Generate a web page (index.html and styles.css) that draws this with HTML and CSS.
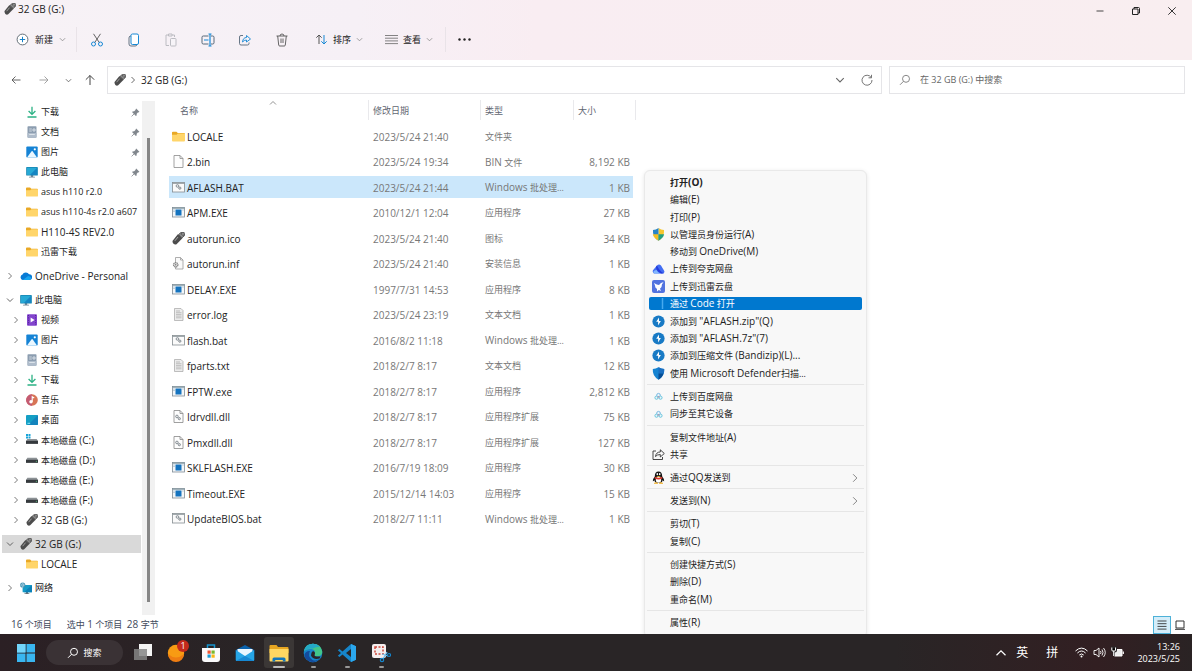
FILE: index.html
```html
<!DOCTYPE html>
<html lang="zh-CN">
<head>
<meta charset="utf-8">
<title>32 GB (G:)</title>
<link rel="stylesheet" href="styles.css">
</head>
<body>
<svg class="sprite" aria-hidden="true">
  <symbol id="usb" viewBox="0 0 12 12"><path d="M.6 8 5.400 2 9.600 5.800 4.200 11.200Q2.800 12.200 1.400 10.900.2 9.500.6 8Z" fill="#4c4c4c"/><path d="M6 2.400 8.200.5 11.200.4 11.700 3.200 9.300 5.400Z" fill="#8c8c8c" stroke="#4c4c4c" stroke-width=".8"/><path d="M8.200 1.800h.9M9.800 3h.9" stroke="#222" stroke-width=".8"/><path d="M2.600 8.200 5.600 4.600" stroke="#a8a8a8" stroke-width=".9"/></symbol>
  <symbol id="folder" viewBox="0 0 12 12"><path d="M0 2.400Q0 1.500.9 1.500h3.200l1.200 1.300h5.800q.9 0 .9.900V6H0Z" fill="#e9a825"/><path d="M0 4.300h4.200l1.200-1.100H12v6.500q0 .9-.9.900H.9Q0 10.600 0 9.700Z" fill="#ffd56a"/></symbol>
  <symbol id="download" viewBox="0 0 12 12"><path d="M6 .8v7.400M2.600 5 6 8.400 9.400 5M1.500 11h9" fill="none" stroke="#2bb184" stroke-width="1.300"/></symbol>
  <symbol id="doc" viewBox="0 0 12 12"><rect x="1.500" y=".3" width="9" height="11.400" rx=".8" fill="#8c9db0"/><path d="M1.500 7h9v4q0 .7-.8.7H2.300q-.8 0-.8-.7Z" fill="#afbccb"/><path d="M3.200 3h2.600M3.200 5h2.600M7 3h2v2H7ZM3.200 8.500h5.600" stroke="#eef3f8" stroke-width=".7" fill="none"/></symbol>
  <symbol id="picture" viewBox="0 0 12 12"><rect x=".3" y=".5" width="11.400" height="11" rx="1" fill="#1583d5"/><path d="M1 11.500 5.600 5.200q.5-.5 1 0L11 11.500Z" fill="#eaf7ff"/><circle cx="8.800" cy="3.300" r="1.100" fill="#fff"/></symbol>
  <symbol id="pc" viewBox="0 0 12 12"><path d="M4.800 9h2.400v1.800H9v.7H3v-.7h1.800Z" fill="#718696"/><rect x=".2" y="1" width="11.600" height="8.600" rx=".7" fill="#1684ae"/><path d="M.9 1.700h10.200v7.200H.9Z" fill="#27a9d5"/><path d="M11.100 1.700v7.200H3.900Z" fill="#1685c2"/></symbol>
  <symbol id="cloud" viewBox="0 0 13 12"><path d="M3 10.300a3 3 0 0 1-.3-5.800 4 4 0 0 1 7.100-.4 3.100 3.100 0 0 1 .5 6.200Z" fill="#087bd5"/><path d="M3 10.300 8 6.500q1-1 2.500 0l1.800 1.300q-.3 2.200-2 2.500Z" fill="#18a5ef"/></symbol>
  <symbol id="video" viewBox="0 0 12 12"><rect x="1" y=".3" width="10" height="11.400" rx="1" fill="#8244cd"/><path d="M2.500 1v10M9.500 1v10" stroke="#532398" stroke-width="1" stroke-dasharray="1 1.400"/><path d="m4.600 3.600 4 2.400-4 2.400Z" fill="#fff"/></symbol>
  <symbol id="music" viewBox="0 0 12 12"><circle cx="6" cy="6" r="5.800" fill="#d77556"/><path d="M.5 8A5.800 5.800 0 0 1 6 .2v11.600A5.800 5.800 0 0 1 .5 8Z" fill="#c45b72"/><circle cx="5" cy="7.700" r="1.700" fill="#fff"/><path d="M6.200 7.700V2.800l2 1.200" stroke="#fff" stroke-width="1.100" fill="none"/></symbol>
  <symbol id="desktop" viewBox="0 0 12 12"><rect x="0" y="1" width="12" height="10" rx="1" fill="#159fc4"/><path d="M12 1v9q0 1-1 1H2Z" fill="#1384bd"/><path d="M1.500 9.300h2.700" stroke="#8beaff" stroke-width="1"/></symbol>
  <symbol id="drive" viewBox="0 0 12 12"><path d="M1.400 3.800h9.200L12 6v2.800H0V6Z" fill="#8d9296"/><path d="M0 5.800h12v3H0Z" fill="#35393d"/><circle cx="10.300" cy="7.300" r=".5" fill="#5de08a"/></symbol>
  <symbol id="sysdrive" viewBox="0 0 12 12"><path d="M1.400 5h9.200L12 7v2.800H0V7Z" fill="#8d9296"/><path d="M0 6.800h12v3H0Z" fill="#35393d"/><path d="M0 0h2v2H0ZM2.500 0h2v2h-2ZM0 2.500h2v2H0ZM2.500 2.500h2v2h-2Z" fill="#18a4d8"/></symbol>
  <symbol id="network" viewBox="0 0 12 12"><path d="M6 10h2v1.300h1.300v.6H4.500v-.6H6Z" fill="#66717b"/><rect x="2.600" y="3" width="9.400" height="7.300" rx=".6" fill="#159bc6"/><path d="M12 3v7.300H4Z" fill="#0b81b8"/><circle cx="2.700" cy="3" r="2.600" fill="#458fae"/><path d="M.3 3h4.800M2.700.5q-2 2.500 0 5M2.700.5q2 2.500 0 5" stroke="#c4e7f3" stroke-width=".5" fill="none"/></symbol>
  <symbol id="pin" viewBox="0 0 9 9"><path d="m5.200.6 3.200 3.200-.7.600-.6-.1-1.400 1.500-.1 1.600-.7.600L1 4.100l.7-.7 1.500-.1L4.700 1.800l-.1-.6Z" fill="#81878d"/><path d="M3 6 .6 8.400" stroke="#81878d" stroke-width=".8"/></symbol>
  <symbol id="right" viewBox="0 0 8 8"><path d="m2.500 1 3 3-3 3" fill="none" stroke="currentColor" stroke-width=".8"/></symbol>
  <symbol id="down" viewBox="0 0 8 8"><path d="m1 2.500 3 3 3-3" fill="none" stroke="currentColor" stroke-width=".9"/></symbol>
  <symbol id="up" viewBox="0 0 8 8"><path d="m1 5.500 3-3 3 3" fill="none" stroke="currentColor" stroke-width=".8"/></symbol>
  <symbol id="file" viewBox="0 0 12 13"><path d="M1.500.5h6l3 3v9h-9ZM7.500.5v3h3" fill="#fdfdfd" stroke="#8b8b8b" stroke-width=".8"/></symbol>
  <symbol id="text" viewBox="0 0 12 13"><path d="M2 .5h6.500l2 2v10H2Z" fill="#ececec" stroke="#a5a5a5" stroke-width=".7"/><path d="M3.500 3h4M3.500 4.700h5.500M3.500 6.400h5.500M3.500 8.100h5.500M3.500 9.800h5.500" stroke="#aaa" stroke-width=".7"/></symbol>
  <symbol id="gears" viewBox="0 0 8 8"><circle cx="2.800" cy="2.800" r="1.500" fill="#eee" stroke="#7c858b" stroke-width="1"/><circle cx="5.500" cy="5.300" r="1.300" fill="#ddd" stroke="#7c858b" stroke-width="1"/></symbol>
  <symbol id="bat" viewBox="0 0 13 12"><rect x=".5" y="1" width="12" height="9.500" fill="#fafafa" stroke="#858d91" stroke-width=".8"/><path d="M.5 1.800h12" stroke="#8c969c"/><use href="#gears" x="3" y="2" width="7" height="7"/></symbol>
  <symbol id="dll" viewBox="0 0 12 13"><path d="M1.500.5h6l3 3v9h-9ZM7.500.5v3h3" fill="#fdfdfd" stroke="#888" stroke-width=".8"/><use href="#gears" x="2" y="4" width="7" height="7"/></symbol>
  <symbol id="inf" viewBox="0 0 12 13"><path d="M3 .5h5l2.500 2.500v9H3ZM8 .5V3h2.500" fill="#fafafa" stroke="#999" stroke-width=".8"/><circle cx="3.200" cy="7.800" r="2.200" fill="#ddd" stroke="#858585" stroke-width="1.200" stroke-dasharray="1.300 .4"/><circle cx="3.200" cy="7.800" r=".7" fill="#777"/></symbol>
  <symbol id="exe" viewBox="0 0 13 12"><rect x=".5" y="1" width="12" height="9.500" fill="#f3f6f8" stroke="#7f8d96" stroke-width=".8"/><path d="M.5 1.700h12" stroke="#7f949f"/><path d="M3.500 3h6v6h-6Z" fill="#1473bf"/><path d="M1.300 3.500h1.400M1.300 5h1.400M10.300 3.500h1.400" stroke="#98b4c5" stroke-width=".8"/></symbol>
  <symbol id="shield" viewBox="0 0 13 13"><path d="M6.500 0Q9 1.900 12 1.900 12.700 9 6.500 12.700Z" fill="#f6c62d"/><path d="M6.500 0Q4 1.900 1 1.900.3 9 6.500 12.700Z" fill="#2584c6"/><path d="M.9 6.300H6.500v6.400Q1.700 10.300.9 6.300Z" fill="#f3bf23"/><path d="M6.500 6.300h5.600Q11.300 10.300 6.500 12.700Z" fill="#249f80"/></symbol>
  <symbol id="quark" viewBox="0 0 13 13"><path d="M2 10.500Q-.7 8.300 2 6l3-3.500q2-2 4 0l3 5q1.500 3-2 3Z" fill="#426df2"/><path d="M5 2.500q2 5 7 8H9Q4 8 4 3.700Z" fill="#253bdc"/><path d="M2 10.500Q0 7.500 4.500 7q1 2.500 4 3.500Z" fill="#83b8ff"/></symbol>
  <symbol id="thunder" viewBox="0 0 13 13"><rect width="13" height="13" rx="2" fill="#5273df"/><path d="M2 3q3 2 5 2 2-3 4.500-2.800L10 4.200q0 3-2 4.500L9 11l-2.200-1L5 11.500V9Q2.800 7.500 3 5.500Z" fill="#fff"/></symbol>
  <symbol id="bandizip" viewBox="0 0 13 13"><circle cx="6.500" cy="6.500" r="6.100" fill="#187ac5"/><path d="M7 2.500 4.200 6.800H6.200L6 10.500l2.900-4.400H7Z" fill="#fff"/></symbol>
  <symbol id="defender" viewBox="0 0 13 13"><path d="M6.500.3Q9.300 2 12.200 2 12.800 9 6.500 12.700.2 9 .8 2 3.700 2 6.500.3Z" fill="#1583d1"/><path d="M6.500.3Q9.300 2 12.200 2q.2 2.500-.5 4.500H6.500Z" fill="#1b6fc1"/><path d="M6.500 6.500h5.200q-1.200 4-5.200 6.200Z" fill="#074d94"/></symbol>
  <symbol id="baidu" viewBox="0 0 13 13"><circle cx="6.500" cy="5.200" r="1.800" fill="#e8f5fc" stroke="#7ab8e2"/><circle cx="4.500" cy="7.700" r="1.600" fill="#e2f6fb" stroke="#6cc5dd"/><circle cx="8.500" cy="7.700" r="1.600" fill="#e2f6fb" stroke="#6cc5dd"/><path d="m5.500 7.500 1-1 1 1" stroke="#dc6580" stroke-width=".8" fill="none"/></symbol>
  <symbol id="shareout" viewBox="0 0 13 13"><path d="M4 3H1v8.500h9.500V9M3.500 8.500Q4 4 8.300 4V1.800l4 3.700-4 3.500V6.500Q5 6.500 3.500 8.500Z" fill="none" stroke="#333" stroke-width=".9"/></symbol>
  <symbol id="qq" viewBox="0 0 13 13"><path d="M2.800 5.500Q2.800.4 6.500.4t3.700 5.100q2.500 3 2 4.800-.7.200-1.500-1.200Q10.500 12 6.500 12T2.300 9.100Q1.500 10.500.8 10.300.3 8.500 2.800 5.500Z" fill="#151515"/><ellipse cx="6.500" cy="8.800" rx="2.700" ry="3" fill="#fff"/><path d="M2.700 5.700q3.800 2 7.600 0v1.800q-3.800 1.800-7.600 0Z" fill="#dd392d"/><path d="M4 4.900h5L6.500 6Z" fill="#f6b927"/><ellipse cx="5.300" cy="3.200" rx=".8" ry="1.100" fill="#fff"/><ellipse cx="7.700" cy="3.200" rx=".8" ry="1.100" fill="#fff"/><path d="M2 12q2-1.500 4 0v.8H2ZM7 12q2-1.500 4 0v.8H7Z" fill="#efad22"/></symbol>
  <symbol id="search" viewBox="0 0 12 12"><circle cx="7" cy="4.800" r="3.500" fill="none" stroke="currentColor" stroke-width="1"/><path d="M4.500 7.300 1 10.800" stroke="currentColor" stroke-width="1"/></symbol>
</svg>

<div class="window">
  <header class="chrome">
    <div class="titlebar">
      <h1 class="title en"><svg class="i12"><use href="#usb"/></svg>32 GB (G:)</h1>
      <div class="window-controls">
        <button aria-label="最小化"><svg class="i10" viewBox="0 0 10 10"><path d="M1.500 5h7" stroke="#333" stroke-width=".9"/></svg></button>
        <button aria-label="还原"><svg class="i10" viewBox="0 0 10 10"><path d="M1.500 3h5.500v5.500H1.500ZM3 3V1.500h4.500q1 0 1 1V7H7" fill="none" stroke="#222" stroke-width="1"/></svg></button>
        <button aria-label="关闭"><svg class="i10" viewBox="0 0 10 10"><path d="m1.300 1.300 7.400 7.400M8.700 1.300 1.300 8.700" stroke="#222" stroke-width=".9"/></svg></button>
      </div>
    </div>
    <div class="toolbar">
      <button class="command new"><svg class="i13" viewBox="0 0 13 13"><circle cx="6.500" cy="6.500" r="5.400" fill="#fff" stroke="#55606a" stroke-width=".9"/><path d="M6.500 3.800v5.400M3.800 6.500h5.400" stroke="#1680ca"/></svg>新建<svg class="i7"><use href="#down"/></svg></button>
      <span class="divider"></span>
      <div class="icon-commands">
        <button aria-label="剪切"><svg class="i14" viewBox="0 0 14 14"><path d="m3.500.8 5.800 8.800M10.500.8 4.700 9.600" stroke="#555" stroke-width=".9"/><circle cx="3.500" cy="11" r="2" fill="none" stroke="#1688d5"/><circle cx="10.500" cy="11" r="2" fill="none" stroke="#1688d5"/></svg></button>
        <button aria-label="复制"><svg class="i14" viewBox="0 0 14 14"><path d="M4 3H3q-1 1-1 2v6q0 2 2 2h4q1.500 0 2-1" fill="none" stroke="#567" stroke-width=".9"/><rect x="4" y="1" width="7.500" height="10.500" rx="1.500" fill="#fff" stroke="#1688d5"/></svg></button>
        <button aria-label="粘贴" disabled><svg class="i14" viewBox="0 0 14 14"><path d="M5 12.500H2V2h2.500M8 2h2.500v2M4.500 1h3.500v2H4.500Z" fill="none" stroke="#bcbcc2"/><rect x="6.500" y="5.500" width="5.500" height="7.500" rx=".8" fill="#f7f4f8" stroke="#bcbcc2"/></svg></button>
        <button aria-label="重命名"><svg class="i14" viewBox="0 0 14 14"><path d="M7.500 3H2.300Q1 3 1 4.300v5.400Q1 11 2.300 11h5.200M10 3h1.700Q13 3 13 4.300v5.400q0 1.300-1.300 1.300H10" fill="none" stroke="#566879"/><path d="M3 7h4.500M9 1v12M7.500 1h3M7.500 13h3" stroke="#1688d5" stroke-width="1.200"/></svg></button>
        <button aria-label="共享"><svg class="i14" viewBox="0 0 14 14"><path d="M5 2.500H3Q1.500 2.500 1.500 4v6.500Q1.500 12 3 12h6.500q1.500 0 1.500-1.500V9.500" fill="none" stroke="#566879" stroke-width=".9"/><path d="M4.500 9Q5 4.500 8.500 4.500v-2L12.500 6 8.500 9V7Q6 7 4.500 9Z" fill="none" stroke="#1688d5" stroke-width=".9"/></svg></button>
        <button aria-label="删除"><svg class="i14" viewBox="0 0 14 14"><path d="M1.500 3h11M5 3q0-2 2-2t2 2M2.700 3l1 9q.1 1 1 1h4.600q.9 0 1-1l1-9M6 5.500v4.500M8 5.500v4.500" fill="none" stroke="#555" stroke-width=".9"/></svg></button>
      </div>
      <button class="command sort"><svg class="i13" viewBox="0 0 13 13"><path d="M4 11V2M1.300 4.700 4 2l2.700 2.700" fill="none" stroke="#555"/><path d="M9 2v9M6.300 8.300 9 11l2.700-2.700" fill="none" stroke="#1688d5"/></svg>排序<svg class="i7"><use href="#down"/></svg></button>
      <button class="command view"><svg class="i13" viewBox="0 0 13 13"><path d="M0 2.500h13M0 5.200h13M0 7.900h13M0 10.600h13" stroke="#666" stroke-width=".8"/></svg>查看<svg class="i7"><use href="#down"/></svg></button>
      <span class="divider"></span>
      <button class="more" aria-label="更多"><svg class="i13" viewBox="0 0 13 13"><g fill="#222"><circle cx="1.500" cy="6.500" r="1.200"/><circle cx="6.500" cy="6.500" r="1.200"/><circle cx="11.500" cy="6.500" r="1.200"/></g></svg></button>
    </div>
  </header>

  <div class="address-row">
    <nav class="history" aria-label="历史">
      <button class="back" aria-label="后退"><svg class="i10" viewBox="0 0 10 10"><path d="M9.500 5H1M4.500 1.500 1 5l3.500 3.500" fill="none" stroke="#555" stroke-width=".9"/></svg></button>
      <button class="forward" aria-label="前进"><svg class="i10" viewBox="0 0 10 10"><path d="M.5 5H9M5.500 1.500 9 5 5.500 8.500" fill="none" stroke="#999" stroke-width=".9"/></svg></button>
      <button class="recent" aria-label="最近位置"><svg class="i7"><use href="#down"/></svg></button>
      <button class="parent" aria-label="向上"><svg class="i12" viewBox="0 0 12 12"><path d="M6 11V1.500M1.800 5.700 6 1.500l4.200 4.200" fill="none" stroke="#444" stroke-width="1"/></svg></button>
    </nav>
    <div class="path">
      <svg class="i12"><use href="#usb"/></svg>
      <svg class="i8"><use href="#right"/></svg>
      <a href="#" class="en">32 GB (G:)</a>
      <button class="path-drop" aria-label="展开"><svg class="i10"><use href="#down"/></svg></button>
      <button aria-label="刷新"><svg class="i12" viewBox="0 0 12 12"><path d="M10.200 3.500A5 5 0 1 0 11 6M10.500.8v3h-3" fill="none" stroke="#666" stroke-width=".9"/></svg></button>
    </div>
    <label class="searchbox"><svg class="i12"><use href="#search"/></svg><input type="search" placeholder="在 32 GB (G:) 中搜索" aria-label="搜索"></label>
  </div>

  <main class="content">
    <nav class="sidebar" aria-label="导航窗格">
      <div class="tree">
        <div class="group">
          <a href="#" class="node leaf"><svg class="i12"><use href="#download"/></svg><span>下载</span><svg class="pin"><use href="#pin"/></svg></a>
          <a href="#" class="node leaf"><svg class="i12"><use href="#doc"/></svg><span>文档</span><svg class="pin"><use href="#pin"/></svg></a>
          <a href="#" class="node leaf"><svg class="i12"><use href="#picture"/></svg><span>图片</span><svg class="pin"><use href="#pin"/></svg></a>
          <a href="#" class="node leaf"><svg class="i12"><use href="#pc"/></svg><span>此电脑</span><svg class="pin"><use href="#pin"/></svg></a>
          <a href="#" class="node leaf"><svg class="i12"><use href="#folder"/></svg><span>asus h110 r2.0</span></a>
          <a href="#" class="node leaf"><svg class="i12"><use href="#folder"/></svg><span>asus h110-4s r2.0 a607</span></a>
          <a href="#" class="node leaf en"><svg class="i12"><use href="#folder"/></svg><span>H110-4S REV2.0</span></a>
          <a href="#" class="node leaf"><svg class="i12"><use href="#folder"/></svg><span>迅雷下载</span></a>
        </div>
        <div class="group">
          <a href="#" class="node en"><svg class="i8"><use href="#right"/></svg><svg class="i12"><use href="#cloud"/></svg><span>OneDrive - Personal</span></a>
        </div>
        <div class="group">
          <a href="#" class="node"><svg class="i8"><use href="#down"/></svg><svg class="i12"><use href="#pc"/></svg><span>此电脑</span></a>
          <a href="#" class="node child"><svg class="i8"><use href="#right"/></svg><svg class="i12"><use href="#video"/></svg><span>视频</span></a>
          <a href="#" class="node child"><svg class="i8"><use href="#right"/></svg><svg class="i12"><use href="#picture"/></svg><span>图片</span></a>
          <a href="#" class="node child"><svg class="i8"><use href="#right"/></svg><svg class="i12"><use href="#doc"/></svg><span>文档</span></a>
          <a href="#" class="node child"><svg class="i8"><use href="#right"/></svg><svg class="i12"><use href="#download"/></svg><span>下载</span></a>
          <a href="#" class="node child"><svg class="i8"><use href="#right"/></svg><svg class="i12"><use href="#music"/></svg><span>音乐</span></a>
          <a href="#" class="node child"><svg class="i8"><use href="#right"/></svg><svg class="i12"><use href="#desktop"/></svg><span>桌面</span></a>
          <a href="#" class="node child"><svg class="i8"><use href="#right"/></svg><svg class="i12"><use href="#sysdrive"/></svg><span>本地磁盘 <b class="en">(C:)</b></span></a>
          <a href="#" class="node child"><svg class="i8"><use href="#right"/></svg><svg class="i12"><use href="#drive"/></svg><span>本地磁盘 <b class="en">(D:)</b></span></a>
          <a href="#" class="node child"><svg class="i8"><use href="#right"/></svg><svg class="i12"><use href="#drive"/></svg><span>本地磁盘 <b class="en">(E:)</b></span></a>
          <a href="#" class="node child"><svg class="i8"><use href="#right"/></svg><svg class="i12"><use href="#drive"/></svg><span>本地磁盘 <b class="en">(F:)</b></span></a>
          <a href="#" class="node child en"><svg class="i8"><use href="#right"/></svg><svg class="i12"><use href="#usb"/></svg><span>32 GB (G:)</span></a>
        </div>
        <div class="group">
          <a href="#" class="node current en"><svg class="i8"><use href="#down"/></svg><svg class="i12"><use href="#usb"/></svg><span>32 GB (G:)</span></a>
          <a href="#" class="node leaf en"><svg class="i12"><use href="#folder"/></svg><span>LOCALE</span></a>
        </div>
        <div class="group">
          <a href="#" class="node"><svg class="i8"><use href="#right"/></svg><svg class="i12"><use href="#network"/></svg><span>网络</span></a>
        </div>
      </div>
      <div class="scrollbar"><div class="thumb"></div></div>
    </nav>

    <section class="files">
      <table>
        <colgroup><col class="c-name"><col class="c-date"><col class="c-type"><col class="c-size"><col class="c-end"></colgroup>
        <thead><tr><th class="name-head"><span>名称</span><svg class="i8"><use href="#up"/></svg></th><th>修改日期</th><th>类型</th><th>大小</th><th class="end-head"></th></tr></thead>
        <tbody>
          <tr><td><svg><use href="#folder"/></svg>LOCALE</td><td>2023/5/24 21:40</td><td>文件夹</td><td></td></tr>
          <tr><td><svg><use href="#file"/></svg>2.bin</td><td>2023/5/24 19:34</td><td><b class="en">BIN</b> 文件</td><td>8,192 KB</td></tr>
          <tr class="selected"><td><svg><use href="#bat"/></svg>AFLASH.BAT</td><td>2023/5/24 21:44</td><td><b class="en">Windows</b> 批处理...</td><td>1 KB</td></tr>
          <tr><td><svg><use href="#exe"/></svg>APM.EXE</td><td>2010/12/1 12:04</td><td>应用程序</td><td>27 KB</td></tr>
          <tr><td><svg><use href="#usb"/></svg>autorun.ico</td><td>2023/5/24 21:40</td><td>图标</td><td>34 KB</td></tr>
          <tr><td><svg><use href="#inf"/></svg>autorun.inf</td><td>2023/5/24 21:40</td><td>安装信息</td><td>1 KB</td></tr>
          <tr><td><svg><use href="#exe"/></svg>DELAY.EXE</td><td>1997/7/31 14:53</td><td>应用程序</td><td>8 KB</td></tr>
          <tr><td><svg><use href="#text"/></svg>error.log</td><td>2023/5/24 23:19</td><td>文本文档</td><td>1 KB</td></tr>
          <tr><td><svg><use href="#bat"/></svg>flash.bat</td><td>2016/8/2 11:18</td><td><b class="en">Windows</b> 批处理...</td><td>1 KB</td></tr>
          <tr><td><svg><use href="#text"/></svg>fparts.txt</td><td>2018/2/7 8:17</td><td>文本文档</td><td>12 KB</td></tr>
          <tr><td><svg><use href="#exe"/></svg>FPTW.exe</td><td>2018/2/7 8:17</td><td>应用程序</td><td>2,812 KB</td></tr>
          <tr><td><svg><use href="#dll"/></svg>Idrvdll.dll</td><td>2018/2/7 8:17</td><td>应用程序扩展</td><td>75 KB</td></tr>
          <tr><td><svg><use href="#dll"/></svg>Pmxdll.dll</td><td>2018/2/7 8:17</td><td>应用程序扩展</td><td>127 KB</td></tr>
          <tr><td><svg><use href="#exe"/></svg>SKLFLASH.EXE</td><td>2016/7/19 18:09</td><td>应用程序</td><td>30 KB</td></tr>
          <tr><td><svg><use href="#exe"/></svg>Timeout.EXE</td><td>2015/12/14 14:03</td><td>应用程序</td><td>15 KB</td></tr>
          <tr><td><svg><use href="#bat"/></svg>UpdateBIOS.bat</td><td>2018/2/7 11:11</td><td><b class="en">Windows</b> 批处理...</td><td>1 KB</td></tr>
        </tbody>
      </table>
    </section>
  </main>

  <footer class="status">
    <span><b class="en">16</b> 个项目</span>
    <span>选中 <b class="en">1</b> 个项目&nbsp; <b class="en">28</b> 字节</span>
    <div class="view-modes">
      <button class="on" aria-label="详细信息"><svg class="i10" viewBox="0 0 10 10"><path d="M.5 1h9M.5 3.700h9M.5 6.400h9M.5 9.100h9" stroke="#333" stroke-width=".9"/></svg></button>
      <button aria-label="大图标"><svg class="i10" viewBox="0 0 10 10"><path d="M1 1h8v7H1ZM0 9.300h10" fill="none" stroke="#333"/></svg></button>
    </div>
  </footer>
</div>

<div class="context-menu" role="menu">
  <div class="menu-group">
    <button role="menuitem"><i></i><strong>打开<b class="en">(O)</b></strong></button>
    <button role="menuitem"><i></i><span>编辑<b class="en">(E)</b></span></button>
    <button role="menuitem"><i></i><span>打印<b class="en">(P)</b></span></button>
    <button role="menuitem"><svg><use href="#shield"/></svg><span>以管理员身份运行<b class="en">(A)</b></span></button>
    <button role="menuitem"><i></i><span>移动到 <b class="en">OneDrive(M)</b></span></button>
    <button role="menuitem"><svg><use href="#quark"/></svg><span>上传到夸克网盘</span></button>
    <button role="menuitem"><svg><use href="#thunder"/></svg><span>上传到迅雷云盘</span></button>
    <button role="menuitem" class="hot"><svg viewBox="0 0 13 13"><path d="M10.500 1v11" stroke="#45a9ef" stroke-width="1.500"/></svg><span>通过 <b class="en">Code</b> 打开</span></button>
    <button role="menuitem"><svg><use href="#bandizip"/></svg><span>添加到 <b class="en">"AFLASH.zip"(Q)</b></span></button>
    <button role="menuitem"><svg><use href="#bandizip"/></svg><span>添加到 <b class="en">"AFLASH.7z"(7)</b></span></button>
    <button role="menuitem"><svg><use href="#bandizip"/></svg><span>添加到压缩文件 <b class="en">(Bandizip)(L)...</b></span></button>
    <button role="menuitem"><svg><use href="#defender"/></svg><span>使用 <b class="en">Microsoft Defender</b>扫描...</span></button>
  </div>
  <div class="menu-group">
    <button role="menuitem"><svg><use href="#baidu"/></svg><span>上传到百度网盘</span></button>
    <button role="menuitem"><svg><use href="#baidu"/></svg><span>同步至其它设备</span></button>
  </div>
  <div class="menu-group">
    <button role="menuitem"><i></i><span>复制文件地址<b class="en">(A)</b></span></button>
    <button role="menuitem"><svg><use href="#shareout"/></svg><span>共享</span></button>
  </div>
  <div class="menu-group">
    <button role="menuitem"><svg><use href="#qq"/></svg><span>通过<b class="en">QQ</b>发送到</span><svg class="sub"><use href="#right"/></svg></button>
  </div>
  <div class="menu-group">
    <button role="menuitem"><i></i><span>发送到<b class="en">(N)</b></span><svg class="sub"><use href="#right"/></svg></button>
  </div>
  <div class="menu-group">
    <button role="menuitem"><i></i><span>剪切<b class="en">(T)</b></span></button>
    <button role="menuitem"><i></i><span>复制<b class="en">(C)</b></span></button>
  </div>
  <div class="menu-group">
    <button role="menuitem"><i></i><span>创建快捷方式<b class="en">(S)</b></span></button>
    <button role="menuitem"><i></i><span>删除<b class="en">(D)</b></span></button>
    <button role="menuitem"><i></i><span>重命名<b class="en">(M)</b></span></button>
  </div>
  <div class="menu-group">
    <button role="menuitem"><i></i><span>属性<b class="en">(R)</b></span></button>
  </div>
</div>

<div class="taskbar">
  <button class="start" aria-label="开始"><svg class="i20" viewBox="0 0 20 20"><path d="M1 1h8.500v8.500H1ZM10.500 1H19v8.500h-8.500ZM1 10.500h8.500V19H1ZM10.500 10.500H19V19h-8.500Z" fill="#39b6f0"/><path d="M1 1h8.500v8.500H1Z" fill="#72d5fa"/></svg></button>
  <button class="task-search"><svg class="i12"><use href="#search"/></svg>搜索</button>
  <div class="apps">
    <button aria-label="任务视图"><svg class="i20" viewBox="0 0 20 20"><path d="M6 1h13v12H6Z" fill="#f4f4f4"/><path d="M1 6h13v11H1Z" fill="#858585" opacity=".85"/></svg></button>
    <button aria-label="小组件"><svg class="i20" viewBox="0 0 20 20"><circle cx="9" cy="10" r="8.200" fill="#f89b13"/><path d="M1 11a8 8 0 0 0 16 0Q9 18 1 11Z" fill="#ef7d12"/></svg><span class="badge">1</span></button>
    <button aria-label="应用商店"><svg class="i20" viewBox="0 0 20 20"><path d="M6.500 5V2h7v3" fill="none" stroke="#1592cb" stroke-width="1.500"/><path d="M1 5h18v11q0 3-3 3H4q-3 0-3-3Z" fill="#fafafa"/><path d="M6.500 7.500h3.200v3.200H6.500Z" fill="#ef5432"/><path d="M10.500 7.500h3.200v3.200h-3.200Z" fill="#77b82b"/><path d="M6.500 11.500h3.200v3.200H6.500Z" fill="#199dd8"/><path d="M10.500 11.500h3.200v3.200h-3.200Z" fill="#f8b714"/></svg></button>
    <button aria-label="邮件"><svg class="i20" viewBox="0 0 20 20"><path d="m.8 7 9.200-5 9.200 5v10.500H.8Z" fill="#0961ab"/><path d="M2.500 6h15v7h-15Z" fill="#e8f6ff"/><path d="m.8 7 9.200 6 9.200-6v10q0 1-1 1H1.800q-1 0-1-1Z" fill="#26a5e6"/><path d="m.8 18 9.200-5 9.200 5Z" fill="#1688d3"/></svg></button>
    <button class="active running" aria-label="文件资源管理器"><svg class="i20" viewBox="0 0 20 20"><path d="M.5 3q0-1 1-1h6l1.500 2h9.500q1 0 1 1v5H.5Z" fill="#e7a621"/><path d="M.5 6h19v11.500q0 1-1 1h-17q-1 0-1-1Z" fill="#ffd762"/><path d="M3.500 18.500V16q0-1.500 1.500-1.500h10q1.500 0 1.500 1.500v2.500h-2.700V17H6.200v1.500Z" fill="#1477bc"/></svg></button>
    <button class="running" aria-label="浏览器"><svg class="i20" viewBox="0 0 20 20"><circle cx="10" cy="10" r="9.300" fill="#1786cb"/><path d="M1 8Q2.500.7 10 .7q8 0 9.300 8-.2 4.500-5 4.500-3 0-2.800-1.200 2-5-3-6Q4 5.500 1 8Z" fill="#42c78b"/><path d="M1 8Q2.500.7 10 .7q4 0 7 3-5 0-7.500 2Q5 4.500 1 8Z" fill="#24a9c8"/><path d="M7 8q-3 5 2.500 9 4.500 1.500 7-1.500-3 4-7.500 3.700Q1 17 1.500 11.500 3 7.500 7 8Z" fill="#144c9d"/><path d="M11.500 12q0 2 6 1.500l-1 2Q10 17 8 12.500 8 9 10 8q3 1 1.500 4Z" fill="#2b2526"/></svg></button>
    <button class="running" aria-label="代码编辑器"><svg class="i20" viewBox="0 0 20 20"><path d="m14 1 5 2.300v13.400L14 19 5.500 11.500 2.500 14 .8 12.800 4 10 .8 7.200 2.500 6l3 2.500ZM14 6l-5 4 5 4Z" fill="#1685ca" fill-rule="evenodd"/><path d="m14 1 5 2.300v13.400L14 19Z" fill="#2ba7ed"/></svg></button>
    <button class="running" aria-label="截图工具"><svg class="i20" viewBox="0 0 20 20"><rect x="1" y="1" width="14" height="14" rx="2" fill="#f4eeee"/><path d="M4 4h8v7H4Z" fill="none" stroke="#cb4a3d" stroke-width="1.500" stroke-dasharray="2 1.500"/><path d="m12 16 4-7M11 11l6 2" stroke="#73bdeb" stroke-width="1.300"/><circle cx="11" cy="17" r="1.700" fill="none" stroke="#1686cc" stroke-width="1.200"/><circle cx="18" cy="12" r="1.500" fill="none" stroke="#1686cc" stroke-width="1.200"/></svg></button>
  </div>
  <div class="tray">
    <button aria-label="显示隐藏的图标"><svg class="i12"><use href="#up"/></svg></button>
    <button class="ime">英</button>
    <button class="ime pinyin">拼</button>
    <button class="system" aria-label="网络、音量、电池">
      <svg class="i13" viewBox="0 0 13 13"><path d="M.5 5Q6.500-.8 12.500 5M2.400 7Q6.500 3 10.600 7M4.300 9Q6.500 6.900 8.700 9" fill="none" stroke="#fff" stroke-width="1"/><circle cx="6.500" cy="10.500" r="1" fill="#fff"/></svg>
      <svg class="i13" viewBox="0 0 13 13"><path d="M1 4.500h2L6 2v9L3 8.500H1ZM7.500 5q1 1.500 0 3M9 3.500q2 3 0 6M10.500 2q3.500 4.500 0 9" fill="none" stroke="#fff" stroke-width=".9"/></svg>
      <svg class="i13" viewBox="0 0 13 13"><path d="M3.500 3.500H11v6.500H3.500Z" fill="#eee" stroke="#fff"/><path d="M12.300 5.500v2.500" stroke="#fff" stroke-width="1.200"/><path d="M.5 1.500h4.500V4q0 1.500-1.500 1.500H2Q.5 5.500.5 4ZM2.700 5.500V10" stroke="#292526" stroke-width="2"/><path d="M.8 1.500v2.500q0 1 1 1h1.700q1 0 1-1V1.500M2.700 5v5" stroke="#fff" fill="none"/></svg>
    </button>
    <time datetime="2023-05-25T13:26">13:26<br>2023/5/25</time>
  </div>
</div>
</body>
</html>
```
FILE: styles.css
```css
* { box-sizing: border-box; }

body {
  margin: 0;
  height: 100vh;
  display: flex;
  flex-direction: column;
  overflow: hidden;
  background: #fff;
  color: #222;
  font: 9px/14px "Open Sans", "Noto Sans CJK SC", sans-serif;
}

button {
  border: 0;
  padding: 0;
  background: none;
  color: inherit;
  font: inherit;
  display: flex;
  align-items: center;
  justify-content: center;
}

a { color: inherit; text-decoration: none; }
b { font-weight: inherit; }
svg { display: block; flex: none; }

.sprite { position: absolute; width: 0; height: 0; }
.en { font-size: 10px; }
.i7 { width: 7px; height: 7px; }
.i8 { width: 8px; height: 8px; }
.i10 { width: 10px; height: 10px; }
.i12 { width: 12px; height: 12px; }
.i13 { width: 13px; height: 13px; }
.i14 { width: 14px; height: 14px; }
.i20 { width: 20px; height: 20px; }

.window { flex: 1; min-height: 0; display: flex; flex-direction: column; }

/* title bar and commands */
.chrome {
  background: linear-gradient(90deg, #f7f2f6 0, #f6f0f6 30%, #f9edf2 45%, #f9eef0 100%);
  height: 60px;
}
.titlebar { display: flex; justify-content: space-between; align-items: flex-start; height: 20px; padding: 0 2px 0 4px; }
.title { margin: 0; display: flex; align-items: center; gap: 2px; height: 18px; font-weight: 400; }
.window-controls { display: flex; }
.window-controls button { width: 36px; height: 22px; }

.toolbar { display: flex; align-items: center; height: 39px; padding-left: 16px; }
.toolbar .divider { width: 1px; height: 25px; background: #e9e3e8; }
.toolbar .i7 { color: #888; }
.command { gap: 5px; }
.new { width: 60px; justify-content: flex-start; gap: 6px; }
.icon-commands { display: flex; margin: 0 15px 0 1px; }
.icon-commands button { width: 37px; height: 30px; }
.view { margin: 0 12px 0 22px; }
.more { margin-left: 12px; }

/* address row */
.address-row { display: flex; align-items: center; height: 38px; padding: 2px 7px 0 9px; }
.history { display: flex; align-items: center; width: 98px; color: #555; }
.history button { height: 28px; }
.back { width: 14px; }
.forward { width: 28px; margin: 0 1px 0 7px; }
.recent { width: 18px; }
.parent { width: 26px; }
.path { flex: 1; display: flex; align-items: center; height: 28px; padding: 0 8px 0 6px; border: 1px solid #e5e5e8; }
.path a { flex: 1; margin-left: 4px; }
.path .i8 { margin-left: 3px; color: #444; }
.path-drop { margin-right: 16px; color: #666; }
.searchbox { display: flex; align-items: center; width: 296px; height: 28px; margin-left: 7px; padding-left: 9px; gap: 9px; border: 1px solid #e5e5e8; color: #888; }
.searchbox input { flex: 1; min-width: 0; padding: 0; border: 0; outline: 0; background: none; font: inherit; }
.searchbox input::placeholder { color: #666; opacity: 1; }

/* navigation pane */
.content { flex: 1; min-height: 0; display: flex; }
.sidebar { display: flex; width: 155px; }
.tree { flex: 1; min-width: 0; padding-top: 4px; }
.group { margin-bottom: 4px; }
.node { display: flex; align-items: center; height: 20px; margin-left: 2px; padding-left: 4px; gap: 3px; white-space: nowrap; color: #222; }
.node .i8 { color: #555; margin-right: 3px; }
.node span { flex: 1; }
.leaf { padding-left: 24px; }
.child { padding-left: 10px; }
.current { margin-right: 1px; height: 18px; margin-top: 5px; margin-bottom: 1px; background: #d9d9d9; }
.pin { width: 9px; height: 9px; margin-right: 2px; }
.scrollbar { width: 13px; margin-top: 3px; padding: 37px 5px 13px 5px; background: #f1f1f1; }
.thumb { height: 100%; background: #868686; }

/* file list */
.files { flex: 1; min-width: 0; padding-left: 14px; }
table { width: 470px; table-layout: fixed; border-collapse: separate; border-spacing: 0; }
.c-name { width: 199px; }
.c-date { width: 112px; }
.c-type { width: 93px; }
.c-size { width: 60px; }
th { position: relative; height: 26px; padding: 0 0 0 5px; text-align: left; font-weight: 400; color: #5f6672; background: linear-gradient(#e9e9ec, #e9e9ec) 0 2px / 1px 20px no-repeat; }
.name-head { padding-left: 11px; background: none; }
.name-head svg { position: absolute; top: 1px; left: 50%; color: #777; }
.end-head { background-position: 2px 2px; }
td { height: 25px; padding: 1px 0 0 5px; border: 0 solid transparent; border-width: 1px 0 2px; background-clip: padding-box; color: #777; font-size: 10px; line-height: 14px; white-space: nowrap; }
tr:nth-child(even) td { height: 26px; }
td:first-child { padding-left: 3px; color: #222; }
td:nth-child(3) { font-size: 9px; }
td:nth-child(4) { padding-right: 3px; text-align: right; }
td svg { display: inline-block; width: 13px; height: 13px; margin-right: 2px; vertical-align: top; }
.selected td { background-color: #cbe7fb; }

/* status bar */
.status { display: flex; align-items: center; height: 19px; padding-left: 11px; gap: 15px; color: #3f4a5c; }
.view-modes { display: flex; margin-left: auto; padding-right: 3px; }
.view-modes button { width: 18px; height: 18px; }
.view-modes .on { border: 1px solid #4db1d8; background: #d4edf9; }

/* context menu */
.context-menu {
  position: absolute;
  left: 644px;
  top: 170px;
  width: 223px;
  padding: 3px 2px 6px;
  border: 1px solid #e9e9e9;
  border-radius: 6px;
  background: #f8f8f8;
  box-shadow: 0 1px 4px #0000001a;
}
.menu-group + .menu-group { margin-top: 2px; padding-top: 3px; border-top: 1px solid #e6e6e6; }
.menu-group button { display: flex; justify-content: flex-start; width: 100%; height: 17px; padding: 0 4px 0 5px; gap: 5px; text-align: left; }
.menu-group button:nth-child(3n),
.menu-group button:last-child:not(:first-child) { height: 18px; }
.menu-group:nth-child(3) button:last-child { height: 17px; }
.menu-group i,
.menu-group svg { width: 13px; height: 13px; }
.menu-group svg.sub { width: 10px; height: 10px; margin-left: auto; color: #888; }
.menu-group .hot { width: calc(100% - 4px); height: 13px; margin: 2px; padding: 0 3px; border-radius: 2px; background: #0078cf; color: #fff; }

/* taskbar */
.taskbar { position: relative; display: flex; align-items: center; height: 37px; padding: 0 12px 0 16px; background: linear-gradient(90deg, #2b2024, #292526 25%, #292526 75%, #321f22 92%, #2a2324); color: #fff; }
.task-search { width: 77px; height: 25px; margin: 0 3px 0 10px; gap: 4px; border-radius: 13px; background: #3a3235; }
.apps { display: flex; }
.apps button { position: relative; width: 34px; height: 37px; }
.apps .active::before { content: ""; position: absolute; inset: 3px 2px; border-radius: 3px; background: #3b3736; }
.apps svg { position: relative; }
.apps .running::after { content: ""; position: absolute; bottom: 3px; width: 5px; height: 2px; border-radius: 1px; background: #999; }
.apps .active::after { width: 12px; background: #bbb; }
.badge { position: absolute; top: 6px; right: 5px; width: 12px; height: 12px; border-radius: 6px; background: #c42b1c; font-size: 9px; line-height: 12px; }
.tray { display: flex; align-items: center; margin-left: auto; }
.ime { margin-left: 9px; font-size: 12px; }
.ime.pinyin { margin-left: 18px; }
.system { gap: 5px; margin: 0 13px 0 17px; }
time { font-size: 9px; line-height: 12px; text-align: right; }
```
